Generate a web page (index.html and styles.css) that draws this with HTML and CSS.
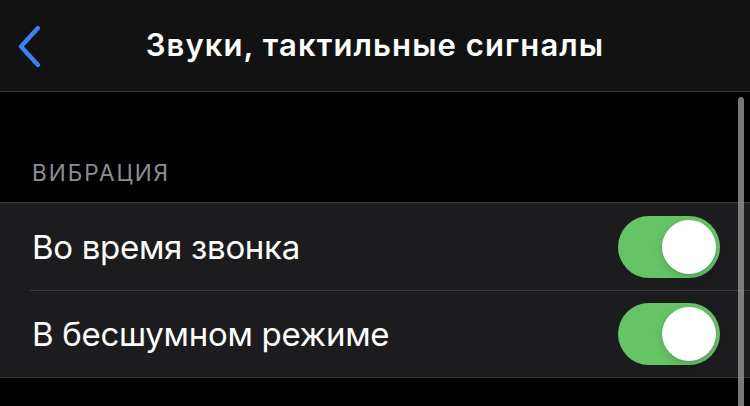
FILE: index.html
```html
<!doctype html>
<html lang="ru">
<head>
  <meta charset="UTF-8">
  <title>Звуки, тактильные сигналы</title>
  <link rel="stylesheet" href="styles.css">
</head>
<body>
  <div class="screen">
    <div class="navbar">
      <a class="back" href="#">
        <svg width="50" height="92" viewBox="0 0 50 92">
          <path d="M38 28 L21 46.5 L38 65" fill="none" stroke="#3b82f6" stroke-width="4.4" stroke-linecap="round" stroke-linejoin="round"/>
        </svg>
      </a>
      <h1 class="title">Звуки, тактильные сигналы</h1>
    </div>

    <div class="section-head">ВИБРАЦИЯ</div>
    <ul class="group">
      <li class="row">
        <span class="label">Во время звонка</span>
        <span class="switch on"><i></i></span>
      </li>
      <li class="row">
        <span class="label">В бесшумном режиме</span>
        <span class="switch on"><i></i></span>
      </li>
    </ul>

    <div class="scroll-thumb"></div>
  </div>
</body>
</html>
```

FILE: styles.css
```css
*{margin:0;
  padding:0;
  list-style:none;
  box-sizing:border-box;}
body{background:#000;
     font-family:Inter, "Noto Sans", "Liberation Sans", sans-serif;
     color:#fff;}
.screen{width:750px;
        height:406px;
        overflow:hidden;
        position:relative;}

/* top bar */
.navbar{height:92px;
        background:#121212;
        border-bottom:1px solid #38383a;
        display:flex;
        align-items:center;
        justify-content:center;
        position:relative;}
.navbar .back{position:absolute;
              left:0;
              top:0;
              display:block;}
.navbar .title{font-size:31px;
               font-weight:600;
               letter-spacing:1.1px;
               margin-top:-2px;}

/* section */
.section-head{padding:67px 0 0 32px;
              height:110px;
              font-size:22.5px;
              color:#8d8d93;
              letter-spacing:2px;}
.group{background:#1c1c1e;
       border-top:1px solid #3a3a3c;
       border-bottom:1px solid #3a3a3c;}
.row{height:87px;
     display:flex;
     align-items:center;
     justify-content:space-between;
     padding:0 30px 0 32px;
     position:relative;}
.row + .row{border-top:1px solid #3a3a3c;
            margin-left:30px;
            padding-left:2px;}
.row .label{font-size:33px;
            letter-spacing:-0.3px;}

/* switch */
.switch{width:102px;
        height:62px;
        border-radius:31px;
        background:#3a3a3c;
        position:relative;
        display:block;}
.switch.on{background:#65c466;}
.switch i{position:absolute;
          top:4px;
          left:4px;
          width:54px;
          height:54px;
          border-radius:50%;
          background:#fff;
          box-shadow:0 3px 8px rgba(0,0,0,.15), 0 1px 1px rgba(0,0,0,.1);}
.switch.on i{left:44px;}

.scroll-thumb{position:absolute;
              left:738px;
              top:97px;
              width:6px;
              height:330px;
              border-radius:3px;
              background:rgba(150,150,150,.8);}
```
